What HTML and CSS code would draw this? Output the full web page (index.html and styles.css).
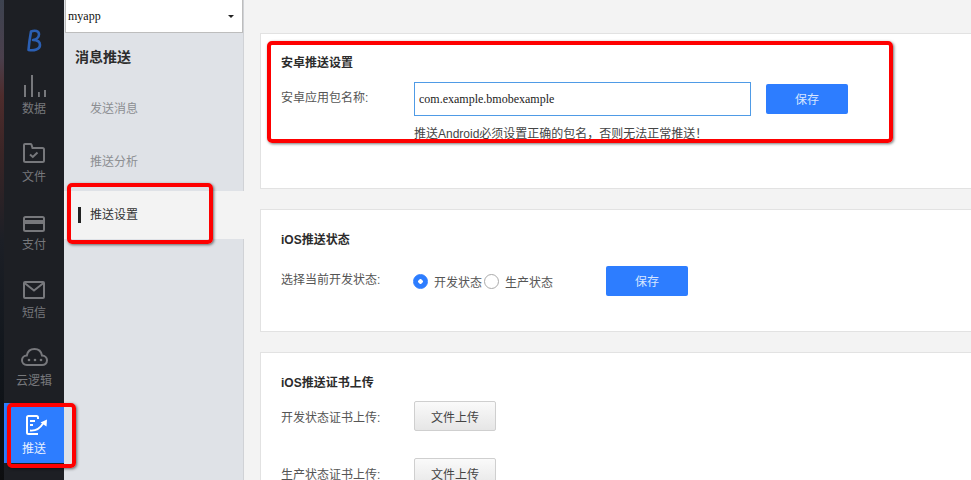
FILE: index.html
```html
<!DOCTYPE html>
<html lang="zh-CN">
<head>
<meta charset="utf-8">
<title>推送设置</title>
<link rel="stylesheet" href="styles.css">
</head>
<body>
<div class="app">
  <div class="wallpaper"></div>
  <nav class="rail">
    <div class="logo">
      <svg width="16" height="24" viewBox="0 0 16 24"><path d="M5 2.500C9 1 13 1.800 13 5.500c0 3-3 5-6 5.500 4 0 7 1.500 7 5 0 4.500-6 6-11.500 5C3 14.500 4 8 5 2.500z" fill="none" stroke="#2b5fb3" stroke-width="2.600" stroke-linejoin="round"/></svg>
    </div>
    <a class="rail-item">
      <svg width="30" height="24" viewBox="0 0 30 24" fill="#77787c"><rect x="5" y="12" width="2" height="12"/><rect x="12" y="2" width="2" height="22"/><rect x="19" y="19" width="1.800" height="5"/><rect x="25" y="17" width="2" height="7"/></svg>
      <span>数据</span>
    </a>
    <a class="rail-item">
      <svg width="30" height="24" viewBox="0 0 30 24" fill="none" stroke="#77787c" stroke-width="2"><path d="M5 19.500V4c0-.6.400-1 1-1h5.500c.5 0 .8.300 1 .7L13.500 7h10c.8 0 1.500.7 1.500 1.500v11c0 .8-.7 1.500-1.500 1.500h-17C5.700 21 5 20.300 5 19.500z"/><path d="M11 13.500l2.800 2.500 4.700-4.500"/></svg>
      <span>文件</span>
    </a>
    <a class="rail-item">
      <svg width="30" height="24" viewBox="0 0 30 24" fill="none" stroke="#77787c" stroke-width="2"><rect x="5" y="8" width="20" height="14" rx="1.500"/><rect x="5" y="11" width="20" height="4" fill="#77787c" stroke="none"/></svg>
      <span>支付</span>
    </a>
    <a class="rail-item">
      <svg width="30" height="24" viewBox="0 0 30 24" fill="none" stroke="#77787c" stroke-width="2"><rect x="5" y="5" width="20" height="16" rx="1"/><path d="M5.500 6l9.500 7.500L24.500 6"/></svg>
      <span>短信</span>
    </a>
    <a class="rail-item">
      <svg width="30" height="24" viewBox="0 0 30 24" fill="none" stroke="#77787c" stroke-width="2"><path d="M8 20c-3.200 0-5-2.200-5-4.800s2-4.600 4.800-4.700C8.500 6.500 11.300 4 15.500 4c4 0 6.800 2.500 7.500 6.500 2.800.2 5 2.200 5 4.800 0 2.700-2 4.700-5 4.700z"/><g fill="#77787c" stroke="none"><circle cx="10" cy="15" r="1.300"/><circle cx="16" cy="15" r="1.300"/><circle cx="22" cy="15" r="1.300"/></g></svg>
      <span>云逻辑</span>
    </a>
    <a class="rail-item is-active">
      <svg width="30" height="24" viewBox="0 0 30 24" fill="none" stroke="#fff" stroke-width="2"><path d="M19 6V4.500C19 3.500 18.500 3 17.500 3H9.500C8.500 3 8 3.500 8 4.500v15c0 1 .5 1.500 1.500 1.500H19"/><path d="M11 8h5M11 12h3"/><path d="M11 17.500c5 .5 10-2 13-7" stroke-width="1.800"/><path d="M21.500 9.500l6.500-3-.5 7z" fill="#fff" stroke="none"/></svg>
      <span>推送</span>
    </a>
  </nav>
  <aside class="subnav">
    <div class="app-select"><span>myapp</span><i class="caret"></i></div>
    <h2 class="subnav-title">消息推送</h2>
    <a class="subnav-item">发送消息</a>
    <a class="subnav-item">推送分析</a>
    <a class="subnav-item is-active">推送设置</a>
  </aside>
  <main class="main">
    <section class="card card-android">
      <h3>安卓推送设置</h3>
      <div class="row row-android">
        <label class="row-label">安卓应用包名称:</label>
        <input class="text-input" type="text" value="com.example.bmobexample">
        <button class="btn-primary">保存</button>
      </div>
      <p class="hint">推送Android必须设置正确的包名，否则无法正常推送！</p>
    </section>
    <section class="card card-status">
      <h3>iOS推送状态</h3>
      <div class="row row-status">
        <label class="row-label">选择当前开发状态:</label>
        <div class="radios">
          <span class="radio is-on"></span><span class="radio-text">开发状态</span>
          <span class="radio"></span><span class="radio-text">生产状态</span>
        </div>
        <button class="btn-primary">保存</button>
      </div>
    </section>
    <section class="card card-cert">
      <h3>iOS推送证书上传</h3>
      <div class="row row-cert">
        <label class="row-label">开发状态证书上传:</label>
        <button class="btn-file">文件上传</button>
      </div>
      <div class="row row-cert">
        <label class="row-label">生产状态证书上传:</label>
        <button class="btn-file">文件上传</button>
      </div>
    </section>
  </main>
</div>
<div class="mark mark-content"></div>
<div class="mark mark-subnav"></div>
<div class="mark mark-rail"></div>
</body>
</html>
```
FILE: styles.css
```css
* { box-sizing: border-box; }
html, body { margin: 0; height: 100%; overflow: hidden; }
body {
  font-family: "Liberation Sans", "Noto Sans CJK SC", sans-serif;
  font-size: 12px;
  color: #444;
  background: #f3f3f3;
}
.app { display: flex; height: 480px; overflow: hidden; }
.wallpaper {
  flex: 0 0 4px;
  background: linear-gradient(180deg, #3d4350 0, #4a3f4c 12%, #4e2c2c 20%, #3a2526 32%, #1c1f26 50%, #11161c 75%, #0d0e10 100%);
}
.rail {
  flex: 0 0 60px;
  background: #1d1f24;
  display: flex;
  flex-direction: column;
  align-items: stretch;
}
.logo { height: 63px; padding-top: 29px; display: flex; justify-content: center; }
.rail-item {
  height: 60px;
  margin-bottom: 8px;
  flex: none;
  padding-top: 10px;
  display: flex;
  flex-direction: column;
  align-items: center;
  gap: 5px;
  color: #77787c;
  font-size: 12px;
  line-height: 14px;
}
.rail-item.is-active { background: #2d7dff; color: #e8f0ff; }
.subnav {
  flex: 0 0 180px;
  background: #dfe2e7;
  border-right: 1px solid #d0d2d6;
  display: flex;
  flex-direction: column;
}
.app-select {
  height: 33px;
  margin-left: 1px;
  width: 178px;
  background: #fff;
  border-bottom: 1px solid #bdbdbd;
  border-right: 1px solid #bdbdbd;
  border-left: 1px solid #bdbdbd;
  display: flex;
  align-items: center;
  justify-content: space-between;
  padding: 0 8px 0 2px;
  font-family: "Liberation Serif", serif;
  font-size: 12px;
  color: #111;
}
.caret {
  width: 0;
  height: 0;
  border-left: 3.500px solid transparent;
  border-right: 3.500px solid transparent;
  border-top: 3.500px solid #222;
}
.subnav-title {
  margin: 15px 0 0;
  padding-left: 11px;
  font-size: 14px;
  line-height: 18px;
  font-weight: bold;
  color: #2c2c2c;
}
.subnav-item {
  height: 48px;
  margin-top: 5px;
  padding: 0 0 2px 26px;
  display: flex;
  align-items: center;
  color: #8c8e92;
  font-size: 12px;
}
.subnav-title + .subnav-item { margin-top: 18px; }
.subnav-item.is-active {
  margin-top: 6px;
  margin-right: -1px;
  padding-bottom: 4px;
  background: #f3f3f3;
  color: #333;
  position: relative;
}
.subnav-item.is-active::before {
  content: "";
  position: absolute;
  left: 14px;
  top: 16px;
  width: 3px;
  height: 16px;
  background: #222;
}
.main {
  flex: 1;
  min-width: 0;
  padding: 33px 0 0 16px;
  display: flex;
  flex-direction: column;
  gap: 20px;
}
.card {
  margin-right: -4px;
  flex: none;
  background: #fff;
  border: 1px solid #e2e2e2;
  padding: 22px 20px 0;
}
.card-android { height: 156px; padding-top: 21px; }
.card-status { height: 123px; }
.card-cert { height: 160px; }
.card h3 {
  margin: 0;
  font-size: 12px;
  line-height: 16px;
  font-weight: bold;
  color: #2c2c2c;
}
.row { display: flex; align-items: center; }
.row-label { flex: 0 0 133px; color: #555; line-height: 16px; }
.row-android { margin-top: 11px; }
.row-android .row-label, .row-status .row-label { padding-bottom: 2px; }
.text-input {
  width: 337px;
  height: 34px;
  border: 1px solid #4f9be6;
  padding: 0 4px;
  font-family: "Liberation Serif", serif;
  font-size: 12px;
  color: #222;
  outline: none;
  background: #fff;
  flex: none;
  border-radius: 0;
}
.btn-primary {
  width: 82px;
  height: 30px;
  background: #2d7dff;
  color: #d7e6ff;
  border: 0;
  border-radius: 2px;
  font-family: inherit;
  font-size: 12px;
  padding: 0 0 2px;
  flex: none;
}
.row-android .btn-primary { margin-left: 15px; }
.hint { margin: 10px 0 0 133px; line-height: 16px; color: #444; }
.row-status { margin-top: 18px; }
.radios { display: flex; align-items: center; flex: 0 0 193px; margin-left: -1px; }
.radio {
  width: 15px;
  height: 15px;
  border-radius: 50%;
  border: 1px solid #aaa;
  background: #fff;
  flex: none;
  margin-right: 6px;
}
.radio.is-on { background: radial-gradient(circle, #fff 0 2px, #2d7dff 2.500px); border-color: #2d7dff; }
.radio-text { color: #555; }
.radio-text:nth-child(2) { margin-right: 2px; }
.row-cert { margin-top: 10px; }
.row-cert + .row-cert { margin-top: 27px; }
.row-cert .row-label { padding-top: 3px; }
.btn-file {
  width: 82px;
  height: 30px;
  border: 1px solid #cfcfcf;
  border-radius: 2px;
  background: linear-gradient(180deg, #fafafa, #e6e6e6);
  color: #444;
  font-family: inherit;
  font-size: 12px;
  padding: 0;
  flex: none;
}
.mark {
  position: absolute;
  border: 4px solid #fe0000;
  border-radius: 5px;
  box-shadow: 1px 1px 3px rgba(0, 0, 0, .55);
  pointer-events: none;
}
.mark-content { left: 267px; top: 41px; width: 626px; height: 102px; }
.mark-subnav { left: 67px; top: 183px; width: 146px; height: 61px; }
.mark-rail { left: 7px; top: 403px; width: 69px; height: 65px; }
```
